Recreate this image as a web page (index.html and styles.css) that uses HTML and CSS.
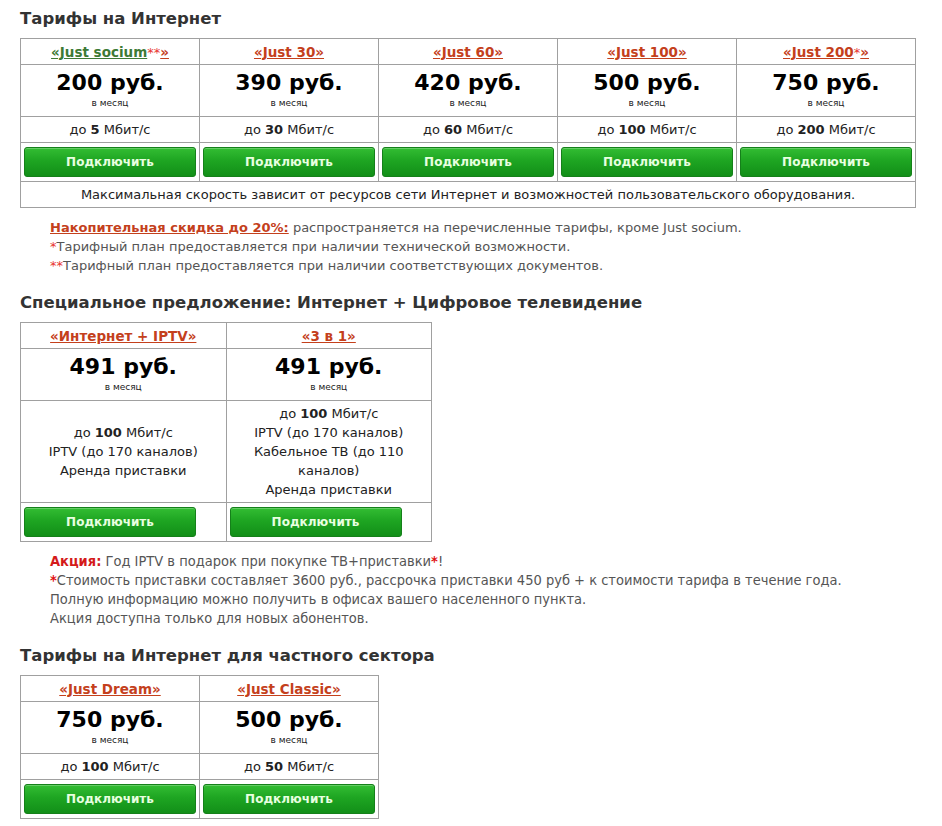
FILE: index.html
```html
<!DOCTYPE html>
<html lang="ru">
<head>
<meta charset="utf-8">
<link rel="stylesheet" href="styles.css">
</head>
<body>
<div class="page">
  <h2 class="title">Тарифы на Интернет</h2>
  <table class="tariffs t5">
    <tr class="r-head">
      <td><a class="lnk green" href="#">«Just socium</a><span class="ast">**</span><a class="lnk" href="#">»</a></td>
      <td><a class="lnk" href="#">«Just 30»</a></td>
      <td><a class="lnk" href="#">«Just 60»</a></td>
      <td><a class="lnk" href="#">«Just 100»</a></td>
      <td><a class="lnk" href="#">«Just 200</a><span class="ast">*</span><a class="lnk" href="#">»</a></td>
    </tr>
    <tr class="r-price">
      <td><div class="price">200 руб.</div><div class="month">в месяц</div></td>
      <td><div class="price">390 руб.</div><div class="month">в месяц</div></td>
      <td><div class="price">420 руб.</div><div class="month">в месяц</div></td>
      <td><div class="price">500 руб.</div><div class="month">в месяц</div></td>
      <td><div class="price">750 руб.</div><div class="month">в месяц</div></td>
    </tr>
    <tr class="r-speed">
      <td>до <b>5</b> Мбит/с</td>
      <td>до <b>30</b> Мбит/с</td>
      <td>до <b>60</b> Мбит/с</td>
      <td>до <b>100</b> Мбит/с</td>
      <td>до <b>200</b> Мбит/с</td>
    </tr>
    <tr class="r-btn">
      <td><a class="btn" href="#">Подключить</a></td>
      <td><a class="btn" href="#">Подключить</a></td>
      <td><a class="btn" href="#">Подключить</a></td>
      <td><a class="btn" href="#">Подключить</a></td>
      <td><a class="btn" href="#">Подключить</a></td>
    </tr>
    <tr class="r-foot">
      <td colspan="5">Максимальная скорость зависит от ресурсов сети Интернет и возможностей пользовательского оборудования.</td>
    </tr>
  </table>

  <div class="notes">
    <p><a class="disc" href="#">Накопительная скидка до 20%:</a> распространяется на перечисленные тарифы, кроме Just socium.</p>
    <p><span class="ast">*</span>Тарифный план предоставляется при наличии технической возможности.</p>
    <p><span class="ast">**</span>Тарифный план предоставляется при наличии соответствующих документов.</p>
  </div>

  <h2 class="title">Специальное предложение: Интернет + Цифровое телевидение</h2>
  <table class="tariffs t2">
    <tr class="r-head">
      <td><a class="lnk" href="#">«Интернет + IPTV»</a></td>
      <td><a class="lnk" href="#">«3 в 1»</a></td>
    </tr>
    <tr class="r-price">
      <td><div class="price">491 руб.</div><div class="month">в месяц</div></td>
      <td><div class="price">491 руб.</div><div class="month">в месяц</div></td>
    </tr>
    <tr class="r-feat">
      <td>до <b>100</b> Мбит/с<br>IPTV (до 170 каналов)<br>Аренда приставки</td>
      <td>до <b>100</b> Мбит/с<br>IPTV (до 170 каналов)<br>Кабельное ТВ (до 110 каналов)<br>Аренда приставки</td>
    </tr>
    <tr class="r-btn">
      <td><a class="btn" href="#">Подключить</a></td>
      <td><a class="btn" href="#">Подключить</a></td>
    </tr>
  </table>

  <div class="notes narrow">
    <p><b class="promo">Акция:</b> Год IPTV в подарок при покупке ТВ+приставки<b class="ast2">*</b>!</p>
    <p><b class="ast2">*</b>Стоимость приставки составляет 3600 руб., рассрочка приставки 450 руб + к стоимости тарифа в течение года.</p>
    <p>Полную информацию можно получить в офисах вашего населенного пункта.</p>
    <p>Акция доступна только для новых абонентов.</p>
  </div>

  <h2 class="title">Тарифы на Интернет для частного сектора</h2>
  <table class="tariffs t2s">
    <tr class="r-head">
      <td><a class="lnk" href="#">«Just Dream»</a></td>
      <td><a class="lnk" href="#">«Just Classic»</a></td>
    </tr>
    <tr class="r-price">
      <td><div class="price">750 руб.</div><div class="month">в месяц</div></td>
      <td><div class="price">500 руб.</div><div class="month">в месяц</div></td>
    </tr>
    <tr class="r-speed">
      <td>до <b>100</b> Мбит/с</td>
      <td>до <b>50</b> Мбит/с</td>
    </tr>
    <tr class="r-btn">
      <td><a class="btn" href="#">Подключить</a></td>
      <td><a class="btn" href="#">Подключить</a></td>
    </tr>
  </table>
</div>
</body>
</html>
```

FILE: styles.css
```css
html, body {
  margin: 0;
  padding: 0;
  background: #fff;
}
body {
  font-family: "DejaVu Sans", Verdana, sans-serif;
  color: #222;
}
.page {
  padding: 8px 0 0 20px;
}
.title {
  margin: 0;
  font-size: 16.5px;
  font-weight: bold;
  color: #333;
  line-height: 22px;
  height: 22px;
}
.tariffs {
  border-collapse: collapse;
  table-layout: fixed;
  margin-top: 8px;
}
.t5 { width: 896px; }
.t2 { width: 412px; }
.t2s { width: 359px; }
.tariffs td {
  border: 1px solid #a0a0a0;
  text-align: center;
  vertical-align: middle;
  padding: 0;
  font-size: 13px;
  color: #222;
}
.r-head td { height: 25px; }
.r-price td { height: 51px; }
.r-speed td { height: 25px; }
.r-btn td { height: 38px; padding: 0 3px; }
.r-foot td { height: 25px; }
.r-feat td { height: 101px; line-height: 19px; padding: 0 6px; }
.lnk {
  font-weight: bold;
  color: #c4401c;
  text-decoration: underline;
  font-size: 13.5px;
}
.lnk.green { color: #3d7a35; }
.ast { color: #e8342e; font-weight: normal; }
.ast2 { color: #e01010; }
.price {
  font-size: 22px;
  font-weight: bold;
  color: #000;
  line-height: 26px;
  margin-top: 2px;
}
.month {
  font-size: 9px;
  color: #222;
  line-height: 14px;
  margin-bottom: 3px;
}
.btn {
  display: flex;
  align-items: center;
  justify-content: center;
  height: 30px;
  width: 172px;
  box-sizing: border-box;
  border: 1px solid #15801a;
  border-radius: 3px;
  background: linear-gradient(#33bd33, #1ea522 45%, #128f18);
  color: #e8ffe0;
  font-size: 12px;
  font-weight: bold;
  text-decoration: none;
  box-shadow: inset 0 1px 0 rgba(255,255,255,0.25);
}
.notes {
  padding: 10px 0 17px 30px;
  font-size: 13px;
  color: #555;
}
.notes p {
  margin: 0;
  line-height: 19px;
  height: 19px;
}
.disc {
  font-weight: bold;
  color: #c4401c;
  text-decoration: underline;
}
.narrow {
  font-family: "DejaVu Sans Condensed", "DejaVu Sans", sans-serif;
  font-stretch: condensed;
  font-size: 14.5px;
  padding-top: 10px;
  padding-bottom: 17px;
}
.promo { color: #d41a1a; }
```
